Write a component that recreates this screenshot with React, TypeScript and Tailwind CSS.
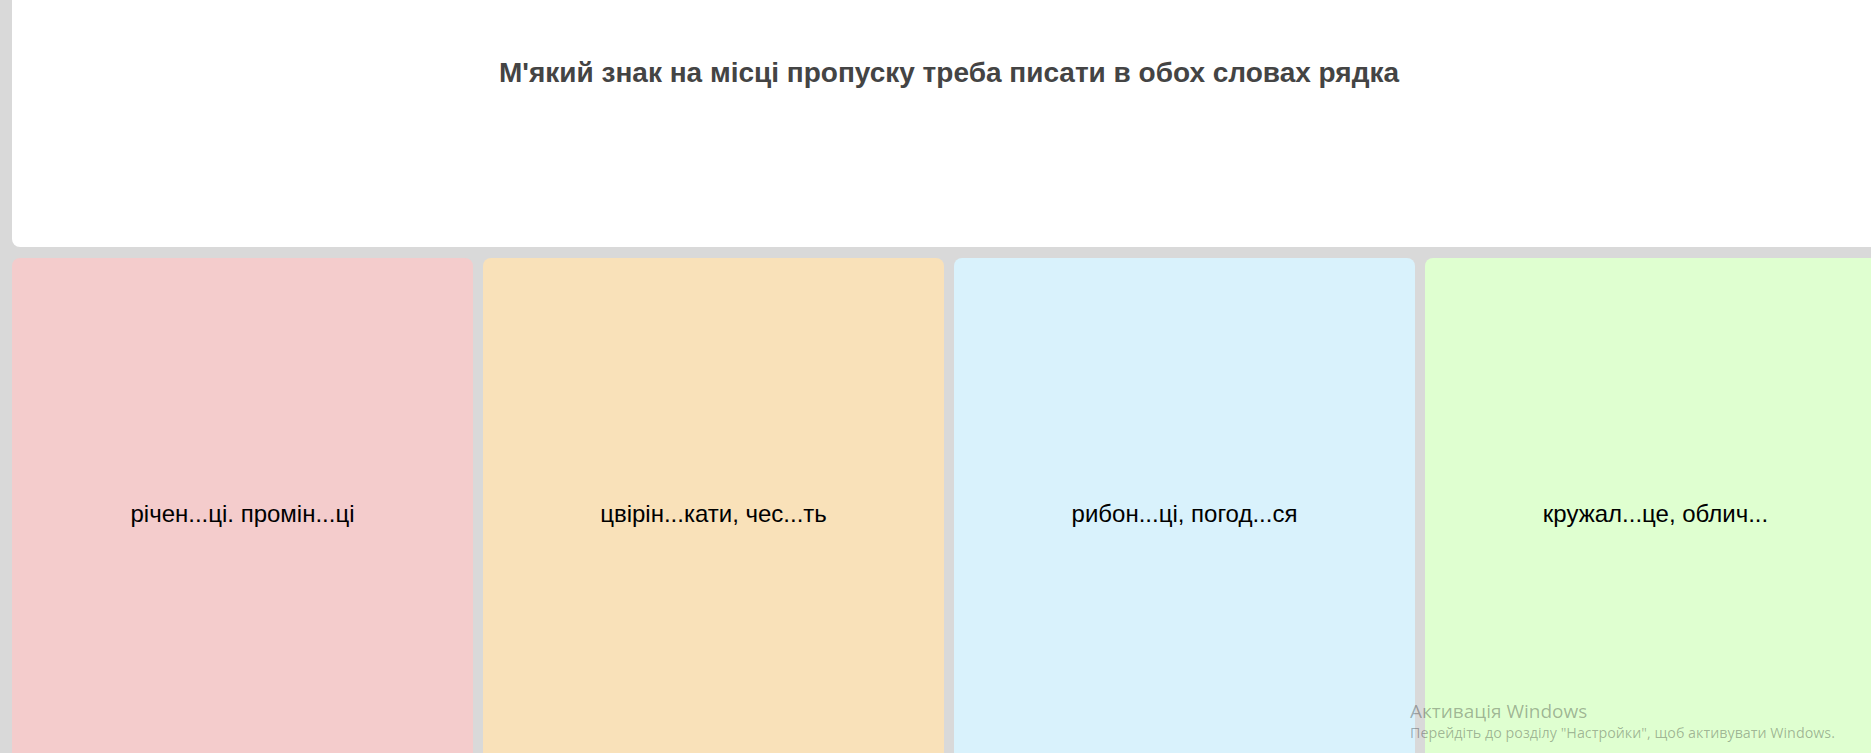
const cards = [
  { text: "річен...ці. промін...ці", bg: "bg-[#f4cccc]" },
  { text: "цвірін...кати, чес...ть", bg: "bg-[#f9e1b9]" },
  { text: "рибон...ці, погод...ся", bg: "bg-[#d9f2fc]" },
  { text: "кружал...це, облич...", bg: "bg-[#dfffd0]" },
];

export default function App() {
  return (
    <div className="relative h-[753px] w-full overflow-hidden bg-[#d9d9d9] pl-3 font-['Liberation_Sans',Arial,sans-serif]">
      <div className="w-[1874px]">
        <div className="flex h-[247px] justify-center rounded-b-lg bg-white pt-[57px]">
          <h1 className="text-[28px] leading-[32px] font-bold text-[#444444]">
            М'який знак на місці пропуску треба писати в обох словах рядка
          </h1>
        </div>

        <div className="mt-[11px] grid grid-cols-4 gap-[10px]">
          {cards.map((c) => (
            <div
              key={c.text}
              className={`flex h-[512px] items-center justify-center rounded-lg ${c.bg}`}
            >
              <span className="text-[24px] text-black">{c.text}</span>
            </div>
          ))}
        </div>
      </div>

      {/* windows activation watermark */}
      <div className="pointer-events-none absolute left-[1410px] top-[699px] font-['Open_Sans','Noto_Sans',sans-serif] text-black/30">
        <div className="text-[19px] leading-[24px]">Активація Windows</div>
        <div className="text-[14.3px] leading-[20px]">
          Перейдіть до розділу "Настройки", щоб активувати Windows.
        </div>
      </div>
    </div>
  );
}
